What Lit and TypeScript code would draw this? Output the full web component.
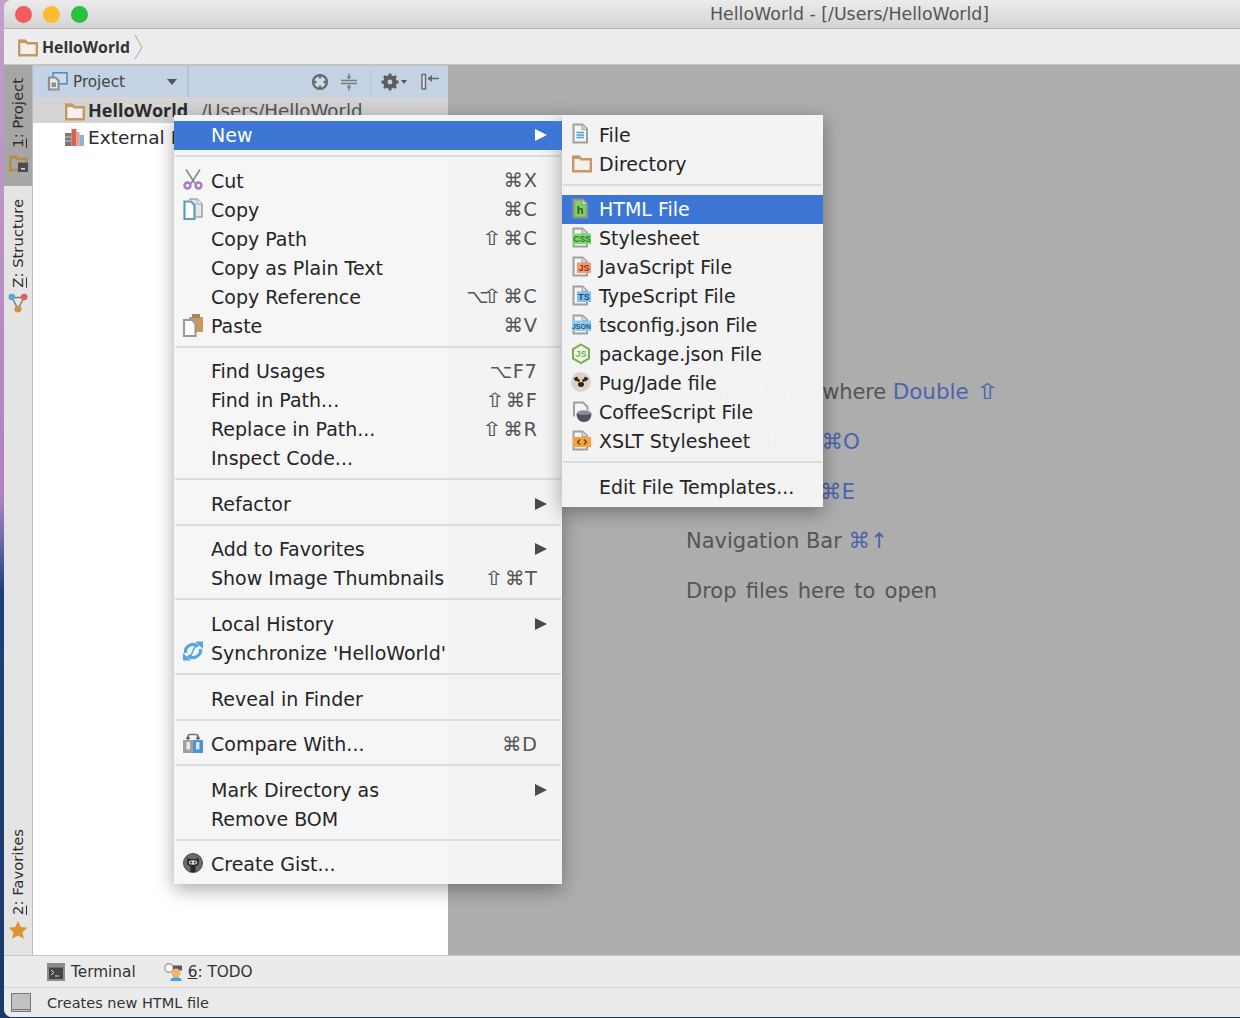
import { LitElement, html, css, svg, nothing } from 'lit'
import { customElement } from 'lit/decorators.js'
import { classMap } from 'lit/directives/class-map.js'

// all menu icons are drawn on a 21px grid
const docShape = svg`<path d="M2.500 1.500h9l4.500 4.500v13.500H2.500z" fill="#f4f4f4" stroke="#a0a0a0" stroke-width="2"/><path d="M11 1.500V6.500h5" fill="#dcdcdc" stroke="#a0a0a0" stroke-width="1"/>`

const band = (fill: string, label: string, ink: string, x: number, size = 9) => svg`
  ${docShape}
  <rect x=${x} y="6.500" width=${20 - x} height="10.500" fill=${fill}/>
  <text x=${(x + 20) / 2} y="15" text-anchor="middle" font-family="Liberation Sans, sans-serif" font-weight="700" font-size=${size} fill=${ink}>${label}</text>`

const folder = svg`<path d="M2.200 5h6.300l1.700 2.200h9.600v12H2.200z" fill="#f5f1ea" stroke="#c29a66" stroke-width="2.400"/><path d="M1 3.500h7.500L10.500 7H1z" fill="#c29a66"/>`

const icons: Record<string, unknown> = {
  folder,
  file: svg`${docShape}<path d="M5.500 9.500h7.500M5.500 12h7.500M5.500 14.500h7.500" stroke="#4b9fd5" stroke-width="1.400"/>`,
  html: svg`<path d="M2.500 1.500h9l4.500 4.500v13.500H2.500z" fill="#7ed257" stroke="#8a9296" stroke-width="2.200"/><path d="M11 1.500V6.500h5" fill="#cfe7c8" stroke="#8a9296" stroke-width="1"/><text x="9" y="16" text-anchor="middle" font-family="Liberation Sans, sans-serif" font-weight="700" font-size="11" fill="#2b5a2b">h</text>`,
  css: band('#74df62', 'CSS', '#3f6b3f', 2, 8.500),
  js: band('#f59a6e', 'JS', '#7a3d20', 6),
  ts: band('#82c0f2', 'TS', '#27496d', 6),
  json: band('#8fcaf5', 'JSON', '#2b557c', 1, 7),
  pkg: svg`<path d="M10 1.500l8 4.600v9.300l-8 4.600-8-4.600V6.100z" fill="#eef5e6" stroke="#79b04f" stroke-width="2"/><text x="10" y="14" text-anchor="middle" font-family="Liberation Sans, sans-serif" font-weight="700" font-size="9" fill="#79b04f">JS</text>`,
  pug: svg`<circle cx="10" cy="10" r="10" fill="#d4d4d4"/><ellipse cx="10" cy="10" rx="6.500" ry="5.500" fill="#e9cfa6"/><path d="M2.500 6.500l3.500-2 1.500 2.500-2.500 2.500zM17.500 6.500l-3.500-2-1.500 2.500 2.500 2.500z" fill="#2e2620"/><ellipse cx="10" cy="12.500" rx="3" ry="2.400" fill="#2e2620"/><circle cx="7.500" cy="8.500" r="1.300" fill="#111"/><circle cx="12.500" cy="8.500" r="1.300" fill="#111"/>`,
  coffee: svg`<path d="M3 15.500V1.500h9l4.500 4.500v3" fill="#f4f4f4" stroke="#a0a0a0" stroke-width="2"/><ellipse cx="13" cy="11.500" rx="7" ry="2.200" fill="#8b8f99"/><path d="M5.500 12c0 6 3 9 7.500 9s7.500-3 7.500-9c-3.500 2-11.500 2-15 0z" fill="#4e5363"/>`,
  xslt: svg`${docShape}<rect x="2" y="7" width="18" height="10" fill="#f5a33e"/><path d="M9 9.500L6.500 12 9 14.500M13 9.500l2.500 2.500-2.500 2.500" fill="none" stroke="#6a4310" stroke-width="1.300"/>`,
  cut: svg`<path d="M3 .5l9 14M17 .5l-9 14" stroke="#858585" stroke-width="1.500" fill="none"/><circle cx="4.500" cy="16.500" r="3" fill="#f4eef7" stroke="#a77cc0" stroke-width="2.400"/><circle cx="15.500" cy="16.500" r="3" fill="#f4eef7" stroke="#a77cc0" stroke-width="2.400"/>`,
  copy: svg`<path d="M6 1h8l5 5v13h-6" fill="#e6e6e6" stroke="#a5a5a5" stroke-width="1.700"/><path d="M14 1v5h5" fill="#f2f2f2" stroke="#a5a5a5" stroke-width="1"/><path d="M1.500 3.500H8l3.500 3.500v14h-10z" fill="#fff" stroke="#5f9bbd" stroke-width="2.200"/>`,
  paste: svg`<rect x="6" y="3" width="14" height="15" fill="#c99a58"/><rect x="9" y="0" width="8" height="4" fill="#a0845c"/><path d="M1 6h8l3.500 3.500V22H1z" fill="#fff" stroke="#9b9b9b" stroke-width="2.200"/>`,
  sync: svg`<path d="M15 5.500A7.500 7.500 0 0 0 2.500 12" fill="none" stroke="#55a6dc" stroke-width="3.200"/><path d="M12 .5h8V8z" fill="#55a6dc"/><path d="M5 14.500A7.500 7.500 0 0 0 17.500 8" fill="none" stroke="#55a6dc" stroke-width="3.200"/><path d="M8 19.500H0V12z" fill="#55a6dc"/><path d="M12.500 4.500L7.500 15.500" stroke="#55a6dc" stroke-width="1.600"/>`,
  compare: svg`<rect x="0" y="7" width="10" height="13" fill="#a0a0a0"/><rect x="10" y="7" width="10" height="13" fill="#4d93cf"/><rect x="3.500" y="9" width="3.500" height="7.500" fill="#ececec"/><rect x="13" y="9" width="3.500" height="7.500" fill="#d6e7f4"/><path d="M5 7V3.500Q5 1.500 7 1.500h6Q15 1.500 15 3.500V7" fill="none" stroke="#777" stroke-width="1.500"/><path d="M2.500 6h5L5 2.500zM12.500 6h5L15 2.500z" fill="#666"/>`,
  gist: svg`<circle cx="10" cy="10" r="9.500" fill="#6b6b6b" stroke="#4b4b4b" stroke-width="1"/><path d="M4.500 4.500l2.500 1.500h6l2.500-1.500.5 4.500c0 3-2 4.500-6 4.500S4 12 4 9z" fill="#2a2a2a"/><ellipse cx="10" cy="9.500" rx="4.200" ry="2.200" fill="#d4d4d4"/><circle cx="8" cy="9.500" r=".9" fill="#222"/><circle cx="12" cy="9.500" r=".9" fill="#222"/><rect x="7.500" y="13" width="5" height="6" fill="#2a2a2a"/>`,
  books: svg`<rect x="1" y="6" width="6.500" height="13" fill="#777"/><path d="M1 10h6.500M1 14h6.500" stroke="#ccc" stroke-width="1"/><rect x="7.500" y="2" width="5" height="17" fill="#d9605a"/><rect x="12.500" y="5" width="3" height="14" fill="#eb9c92"/><rect x="15.500" y="8" width="4.500" height="11" fill="#8bb4d8"/>`,
  projectTab: svg`<path d="M2.200 4h5.800l1.500 2h9v11H2.200z" fill="none" stroke="#b98a4c" stroke-width="2.400"/><path d="M1 2.500h7L10 6H1z" fill="#b98a4c"/><rect x="10" y="9.500" width="10" height="9.500" fill="#4c4c4c"/><rect x="13" y="15" width="4" height="1.500" fill="#ddd"/>`,
  structure: svg`<path d="M4 4.500h12L10 16z" fill="none" stroke="#7a7a7a" stroke-width="1.400"/><circle cx="3.800" cy="4" r="3.300" fill="#54a6e0"/><circle cx="16.200" cy="4" r="3.300" fill="#e0605c"/><circle cx="10" cy="16" r="3.500" fill="#c9934e"/>`,
  star: svg`<path d="M10 1l2.800 6 6.500.8-4.800 4.500 1.300 6.500L10 15.500l-5.800 3.300 1.300-6.500L.7 7.800l6.500-.8z" fill="#dd9430"/>`,
  projectView: svg`<rect x="6" y="1.800" width="14" height="11" fill="#cddbe9" stroke="#4a90c4" stroke-width="1.600"/><path d="M2 6.500h6.500l3 3v9H2z" fill="#e9e9e9" stroke="#8e8e8e" stroke-width="2.200"/><path d="M4.500 11.500h4.500v4.500H4.500z" fill="#8e8e8e"/>`,
  locate: svg`<circle cx="9" cy="9" r="6.900" fill="#d3dce8" stroke="#6a6a6a" stroke-width="2.300"/><path d="M9 1v4.500M9 12.500V17M1 9h4.500M12.500 9H17" stroke="#6a6a6a" stroke-width="2.300"/>`,
  collapse: svg`<path d="M1 7.500h16M1 10.500h16" stroke="#7c7c7c" stroke-width="1.300"/><path d="M9 .5v4.500M9 13v4.500" stroke="#7c7c7c" stroke-width="1.400"/><path d="M6.500 3.500h5L9 6.500zM6.500 14.500h5L9 11.500z" fill="#7c7c7c"/>`,
  gear: svg`<circle cx="9" cy="9" r="5.200" fill="none" stroke="#5c5c5c" stroke-width="3.200"/><path d="M9 .5v17M.5 9h17M3 3l12 12M15 3L3 15" stroke="#5c5c5c" stroke-width="2.800"/><circle cx="9" cy="9" r="2.400" fill="#c5d2e3"/>`,
  pin: svg`<rect x="1" y="1.500" width="3.500" height="14.500" fill="#dfe5ec" stroke="#666" stroke-width="1.400"/><path d="M7 5.500h11" stroke="#666" stroke-width="1.500"/><path d="M11 2v7L6.500 5.500z" fill="#666"/>`,
  terminal: svg`<rect x="0" y="0" width="18" height="18" fill="#8c8c8c"/><rect x="2" y="4.500" width="14" height="11.500" fill="#444"/><path d="M4 7l3 2.500L4 12" fill="none" stroke="#ddd" stroke-width="1"/><path d="M8 13h4" stroke="#ddd" stroke-width="1"/>`,
  todo: svg`<circle cx="5" cy="5" r="4.300" fill="#fff" stroke="#a0a0a0" stroke-width="1.500"/><path d="M9 2.500h9v5H9z" fill="#5a5a5a"/><circle cx="12" cy="10" r="4.500" fill="#f2b36f"/><path d="M6.500 18c0-3 2-3.800 5.500-3.800s5.500.8 5.500 3.800z" fill="#4aa3dc"/>`,
}

const icon = (name: string, size = 21) =>
  html`<svg class="icon" width=${size} height=${size} viewBox="0 0 ${size} ${size}">${icons[name]}</svg>`

// the DejaVu shift arrow is too narrow, so it gets widened
const shortcut = (key: string) =>
  key.split('⇧').map((part, i) => html`${i ? html`<span class="shift">⇧</span>` : nothing}${part}`)

type Row = {
  label?: string
  icon?: string
  key?: string
  sub?: boolean
  on?: boolean
}

const mainMenu: Row[] = [
  { label: 'New', sub: true, on: true },
  {},
  { label: 'Cut', icon: 'cut', key: '⌘X' },
  { label: 'Copy', icon: 'copy', key: '⌘C' },
  { label: 'Copy Path', key: '⇧⌘C' },
  { label: 'Copy as Plain Text' },
  { label: 'Copy Reference', key: '⌥⇧⌘C' },
  { label: 'Paste', icon: 'paste', key: '⌘V' },
  {},
  { label: 'Find Usages', key: '⌥F7' },
  { label: 'Find in Path...', key: '⇧⌘F' },
  { label: 'Replace in Path...', key: '⇧⌘R' },
  { label: 'Inspect Code...' },
  {},
  { label: 'Refactor', sub: true },
  {},
  { label: 'Add to Favorites', sub: true },
  { label: 'Show Image Thumbnails', key: '⇧⌘T' },
  {},
  { label: 'Local History', sub: true },
  { label: "Synchronize 'HelloWorld'", icon: 'sync' },
  {},
  { label: 'Reveal in Finder' },
  {},
  { label: 'Compare With...', icon: 'compare', key: '⌘D' },
  {},
  { label: 'Mark Directory as', sub: true },
  { label: 'Remove BOM' },
  {},
  { label: 'Create Gist...', icon: 'gist' },
]

const newMenu: Row[] = [
  { label: 'File', icon: 'file' },
  { label: 'Directory', icon: 'folder' },
  {},
  { label: 'HTML File', icon: 'html', on: true },
  { label: 'Stylesheet', icon: 'css' },
  { label: 'JavaScript File', icon: 'js' },
  { label: 'TypeScript File', icon: 'ts' },
  { label: 'tsconfig.json File', icon: 'json' },
  { label: 'package.json File', icon: 'pkg' },
  { label: 'Pug/Jade file', icon: 'pug' },
  { label: 'CoffeeScript File', icon: 'coffee' },
  { label: 'XSLT Stylesheet', icon: 'xslt' },
  {},
  { label: 'Edit File Templates...' },
]

@customElement('app-root')
export class AppRoot extends LitElement {
  static styles = css`
    :host {
      display: block;
      position: relative;
      width: 1240px;
      height: 1018px;
      overflow: hidden;
      background: linear-gradient(180deg, #c2a0cc 0%, #b280bc 49%, #6a6cae 53%, #1e3f78 58%, #1a3a6a 100%);
      font-family: 'DejaVu Sans', sans-serif;
      color: #2b2b2b;
    }
    .icon { display: block; flex: none; overflow: visible; }
    .shift { display: inline-block; transform: scaleX(1.35); margin: 0 2px; }
    .window {
      margin-left: 4px;
      height: 1017px;
      display: flex;
      flex-direction: column;
      border-radius: 8px 0 0 8px;
      overflow: hidden;
      position: relative;
      background: #ececec;
    }
    .titlebar {
      height: 28px;
      flex: none;
      display: flex;
      align-items: center;
      padding-left: 10.500px;
      gap: 12px;
      background: linear-gradient(180deg, #ebebeb, #d4d4d4);
      border-bottom: 1px solid #b4b4b4;
    }
    .light { width: 17px; height: 17px; border-radius: 50%; flex: none; margin-right: -1px; }
    .red { background: #f45b5b; }
    .yellow { background: #fdbb2f; }
    .green { background: #28c13f; }
    .title {
      margin-left: 611.500px;
      font-size: 17.400px;
      color: #555;
      white-space: nowrap;
    }
    .nav {
      height: 35px;
      flex: none;
      display: flex;
      align-items: center;
      padding-left: 13px;
      gap: 4px;
      background: #ededed;
      border-bottom: 1px solid #c4c4c4;
      font-family: 'Open Sans', sans-serif;
      font-size: 15.800px;
      font-weight: 700;
      color: #333;
    }
    .chev { width: 9px; height: 26px; margin-left: 0; }
    .main { flex: 1; display: flex; min-height: 0; }
    .strip {
      width: 28px;
      flex: none;
      display: flex;
      flex-direction: column;
      background: #e4e4e4;
      border-right: 1px solid #bcbcbc;
    }
    .tab {
      display: flex;
      flex-direction: column;
      align-items: center;
      gap: 5px;
      width: 28px;
      padding: 13px 0 13px;
      box-sizing: border-box;
    }
    .tab.on { background: #a6a6a6; height: 121px; }
    .tab.push { margin-top: auto; padding-bottom: 14px; }
    .vert {
      writing-mode: vertical-rl;
      transform: rotate(180deg);
      font-size: 14.800px;
      line-height: 18px;
      color: #2c2c2c;
      white-space: nowrap;
    }
    .vert u { text-underline-offset: 1px; }
    .panel { width: 415px; flex: none; display: flex; flex-direction: column; background: #fff; }
    .head {
      height: 32px;
      flex: none;
      display: flex;
      align-items: center;
      background: #c5d2e3;
      box-sizing: border-box;
      border-top: 1px solid #c0c0c0;
      font-size: 15.200px;
      color: #444;
    }
    .combo {
      width: 156px;
      height: 100%;
      flex: none;
      display: flex;
      align-items: center;
      padding-left: 14px;
      box-sizing: border-box;
      gap: 5px;
      border-right: 2px solid #b6c3d4;
    }
    .drop {
      width: 0;
      height: 0;
      margin-left: auto;
      margin-right: 10px;
      border: 5px solid transparent;
      border-top: 6px solid #555;
      border-bottom: 0;
    }
    .tools { flex: 1; display: flex; align-items: center; padding-left: 122px; }
    .tools .c { margin-left: 11px; }
    .tools .bar { width: 1px; height: 24px; background: #b6c3d4; margin: 0 10px 0 12px; }
    .tiny {
      width: 0;
      height: 0;
      margin: 0 14px 0 2px;
      border: 3.500px solid transparent;
      border-top: 4px solid #555;
      border-bottom: 0;
    }
    .tree-row {
      display: flex;
      align-items: center;
      gap: 3px;
      padding-left: 31px;
      font-size: 18.500px;
      white-space: nowrap;
    }
    .tree-row.sel {
      height: 26px;
      background: #d4d4d4;
      font-family: 'Open Sans', sans-serif;
      font-size: 18px;
      font-weight: 700;
    }
    .tree-row.ext { height: 28px; }
    .path { font-family: 'DejaVu Sans', sans-serif; font-weight: 400; color: #555; font-size: 18.200px; margin-left: 10px; }
    .editor {
      flex: 1;
      background: #adadad;
      padding: 314px 0 0 238px;
      display: flex;
      flex-direction: column;
      gap: 23.300px;
      font-size: 21px;
      line-height: 26.500px;
      color: #555;
      white-space: nowrap;
    }
    .kbd { color: #4c64ad; font-size: 21.500px; }
    .tight { letter-spacing: -0.18px; }
    .gap8 { margin-left: 8px; }
    .gap2 { margin-left: 2px; }
    .wide { word-spacing: 2.500px; }
    .tools-bar {
      height: 32px;
      flex: none;
      display: flex;
      align-items: center;
      padding: 1px 0 0 43px;
      gap: 28px;
      background: #ebebeb;
      border-top: 1px solid #c8c8c8;
      box-sizing: border-box;
      font-size: 15.300px;
      color: #333;
    }
    .tool { display: flex; align-items: center; gap: 6px; }
    .status {
      height: 29px;
      flex: none;
      display: flex;
      align-items: center;
      padding-left: 7px;
      gap: 16px;
      background: #ebebeb;
      border-top: 1px solid #d4d4d4;
      font-size: 14.500px;
      color: #333;
    }
    .square { width: 18px; height: 15px; background: #c2c2c2; border: 1px solid #777; border-bottom: 3px double #777; }
    .menus {
      position: absolute;
      left: 170px;
      top: 115px;
      display: flex;
      align-items: flex-start;
    }
    .menu {
      background: rgba(246, 246, 246, 0.965);
      box-shadow: 0 5px 18px rgba(0, 0, 0, 0.35);
      font-size: 19px;
      color: #252525;
    }
    .menu.a { width: 388px; padding: 5.500px 0 5px; }
    .menu.b { width: 261px; padding: 5px 0 6px; }
    .row {
      height: 29px;
      display: flex;
      align-items: center;
      padding-left: 37px;
      padding-right: 25px;
      position: relative;
      white-space: nowrap;
    }
    .row.on { background: #3c77d6; color: #fff; }
    .row .ic { position: absolute; left: 9px; top: 3px; }
    .row .key { margin-left: auto; color: #555; font-size: 19.500px; letter-spacing: 0.6px; margin-right: -0.600px; }
    .row .key .shift { margin-left: -5px; }
    .row .arrow {
      margin-left: auto;
      margin-right: -10px;
      width: 0;
      height: 0;
      border: 6.500px solid transparent;
      border-left: 12px solid #4a4a4a;
      border-right: 0;
    }
    .row.on .arrow { border-left-color: #fff; }
    .sep { height: 16.600px; box-sizing: border-box; padding: 5.500px 1px 0; }
    .sep::after { content: ''; display: block; height: 2px; background: #dcdcdc; }
  `

  private row(r: Row) {
    if (!r.label) return html`<div class="sep"></div>`
    return html`
      <div class=${classMap({ row: true, on: !!r.on })}>
        ${r.icon ? html`<span class="ic">${icon(r.icon)}</span>` : nothing}
        <span>${r.label}</span>
        ${r.key ? html`<span class="key">${shortcut(r.key)}</span>` : nothing}
        ${r.sub ? html`<span class="arrow"></span>` : nothing}
      </div>
    `
  }

  render() {
    return html`
      <div class="window">
        <div class="titlebar">
          <span class="light red"></span>
          <span class="light yellow"></span>
          <span class="light green"></span>
          <span class="title">HelloWorld - [/Users/HelloWorld]</span>
        </div>
        <div class="nav">
          ${icon('folder')}
          <span>HelloWorld</span>
          <svg class="chev" viewBox="0 0 9 26"><path d="M1 1l7 12-7 12" fill="none" stroke="#b5b5b5" stroke-width="1.200"/></svg>
        </div>
        <div class="main">
          <div class="strip">
            <div class="tab on">
              <span class="vert"><u>1</u>: Project</span>
              ${icon('projectTab')}
            </div>
            <div class="tab">
              <span class="vert"><u>Z</u>: Structure</span>
              ${icon('structure')}
            </div>
            <div class="tab push">
              <span class="vert"><u>2</u>: Favorites</span>
              ${icon('star')}
            </div>
          </div>
          <div class="panel">
            <div class="head">
              <div class="combo">
                ${icon('projectView')}
                <span>Project</span>
                <span class="drop"></span>
              </div>
              <div class="tools">
                ${icon('locate', 18)}
                <span class="c">${icon('collapse', 18)}</span>
                <span class="bar"></span>
                ${icon('gear', 18)}
                <span class="tiny"></span>
                ${icon('pin', 18)}
              </div>
            </div>
            <div class="tree-row sel">
              ${icon('folder')}
              <span>HelloWorld</span>
              <span class="path">/Users/HelloWorld</span>
            </div>
            <div class="tree-row ext">
              ${icon('books')}
              <span>External Libraries</span>
            </div>
          </div>
          <div class="editor">
            <div><span class="tight">Search Everywhere</span> <span class="kbd">Double ${shortcut('⇧')}</span></div>
            <div>Go to File <span class="kbd gap8">${shortcut('⇧⌘O')}</span></div>
            <div>Recent Files <span class="kbd gap2">⌘E</span></div>
            <div>Navigation Bar <span class="kbd">⌘↑</span></div>
            <div class="wide">Drop files here to open</div>
          </div>
        </div>
        <div class="tools-bar">
          <span class="tool">${icon('terminal', 18)}Terminal</span>
          <span class="tool">${icon('todo', 18)}<span><u>6</u>: TODO</span></span>
        </div>
        <div class="status">
          <span class="square"></span>
          <span>Creates new HTML file</span>
        </div>
        <div class="menus">
          <div class="menu a">${mainMenu.map(r => this.row(r))}</div>
          <div class="menu b">${newMenu.map(r => this.row(r))}</div>
        </div>
      </div>
    `
  }
}
